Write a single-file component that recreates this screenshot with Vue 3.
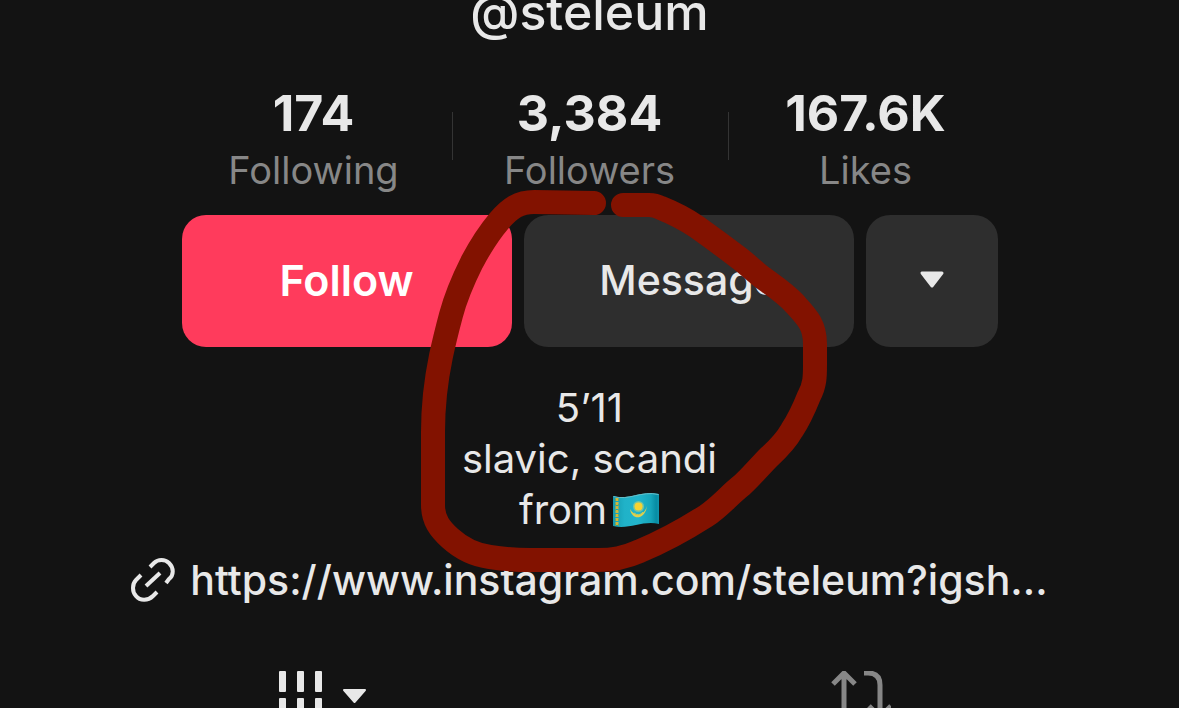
<script setup>
const stats = [
  { value: '174', label: 'Following' },
  { value: '3,384', label: 'Followers' },
  { value: '167.6K', label: 'Likes' },
]
</script>

<template>
  <main class="profile">
    <h1 class="handle">@steleum</h1>

    <ul class="stats">
      <li v-for="s in stats" :key="s.label" class="stat">
        <strong class="stat-value">{{ s.value }}</strong>
        <span class="stat-label">{{ s.label }}</span>
      </li>
    </ul>

    <div class="actions">
      <button class="btn follow" type="button">Follow</button>
      <button class="btn message" type="button">Message</button>
      <button class="btn more" type="button" aria-label="More options">
        <svg width="26" height="18" viewBox="0 0 26 18" aria-hidden="true">
          <path d="M3 2H23L13 15Z" fill="currentColor" stroke="currentColor" stroke-width="3" stroke-linejoin="round" />
        </svg>
      </button>
    </div>

    <div class="bio">
      <p>5’11</p>
      <p>slavic, scandi</p>
      <p class="origin">
        from
        <svg class="flag" width="48" height="36" viewBox="0 0 48 36" role="img" aria-label="Flag of Kazakhstan">
          <defs>
            <linearGradient id="cloth" x1="0" x2="1" y1="0" y2="0">
              <stop offset="0" stop-color="#159aae" />
              <stop offset="0.25" stop-color="#20b2c8" />
              <stop offset="0.55" stop-color="#22b5cc" />
              <stop offset="0.82" stop-color="#16a5ba" />
              <stop offset="0.94" stop-color="#078ca3" />
              <stop offset="1" stop-color="#1296ad" />
            </linearGradient>
          </defs>
          <path d="M1 4C17 9 29-2 47 2V32C31 28 17 38 1 34Z" fill="url(#cloth)" />
          <path d="M1.500 4.500C17 9 29-1.500 46.500 2.500" fill="none" stroke="#69bfc9" stroke-width="1" />
          <path d="M5 6V34" stroke="#d3b63a" stroke-width="3" stroke-dasharray="3 1" />
          <path d="M3.500 7V34M6.500 7V34" stroke="#6ea85c" stroke-width="1" stroke-dasharray="2 3" />
          <circle cx="26.500" cy="14.500" r="5.500" fill="#74c4a0" />
          <circle cx="26.500" cy="14.500" r="4" fill="#f6d332" />
          <path d="M18 17C20 29 33 28 35 14C32 24 23 26 18 17Z" fill="#e3d04b" />
          <path d="M22 21Q27 25 31 20" fill="none" stroke="#c9cc57" stroke-width="1" />
        </svg>
      </p>
    </div>

    <a class="link" href="https://www.instagram.com/steleum">
      <svg class="link-icon" width="44" height="44" viewBox="0 0 44 44" fill="none" stroke="currentColor" stroke-width="4" aria-hidden="true">
        <path d="M19 9L23 5C27 1 34 1 38 5C43 10 43 17 38 21L35 25" />
        <path d="M26 34L22 38C17 43 9 43 5 38C1 34 1 26 5 22L10 17" />
        <path d="M15 28L29 15" />
      </svg>
      <span class="link-text">https://www.instagram.com/steleum?igsh...</span>
    </a>

    <nav class="tabs">
      <button class="tab" type="button" aria-label="Posts">
        <svg width="88" height="48" viewBox="0 0 88 48" fill="currentColor" aria-hidden="true">
          <rect x="0" y="0" width="7" height="21" rx="1" />
          <rect x="18" y="0" width="7" height="21" rx="1" />
          <rect x="36" y="0" width="7" height="21" rx="1" />
          <rect x="0" y="27" width="7" height="21" rx="1" />
          <rect x="18" y="27" width="7" height="21" rx="1" />
          <rect x="36" y="27" width="7" height="21" rx="1" />
          <path d="M65 19H86L75.500 31Z" stroke="currentColor" stroke-width="2" stroke-linejoin="round" />
        </svg>
      </button>
      <button class="tab muted" type="button" aria-label="Reposts">
        <svg width="60" height="48" viewBox="0 0 60 48" fill="none" stroke="currentColor" stroke-width="5" aria-hidden="true">
          <path d="M13 48V2M2 13L13 2L24 13" stroke-linejoin="round" />
          <path d="M33 2H37Q49 2 49 14V46M38 35L49 46L60 35" />
        </svg>
      </button>
    </nav>

    <svg class="marker" width="1180" height="708" viewBox="0 0 1180 708" aria-hidden="true">
      <path d="M594 203L534 202C519 202 510 208 499 221C488 234 480 247 472 262C464 278 456 296 451 315C447 330 444 342 441 356C436 380 433 410 433 432V505C433 520 440 529 450 538C462 549 475 555 490 557Q510 560 530 560H598C613 560 624 558 640 551C662 542 684 530 706 516C721 506 728 496 742 485C751 477 760 466 769 457C779 448 787 439 792 430C800 418 805 406 809 396C815 385 815 376 815 365V344C815 325 807 317 795 304C786 294 774 286 763 278C754 271 748 265 739 258Q718 242 697 227Q681 216 661 208Q655 205 649 205H623" />
    </svg>
  </main>
</template>

<style>
body {
  background: #131313;
}
</style>

<style scoped>
.profile {
  position: relative;
  display: flex;
  flex-direction: column;
  align-items: center;
  height: 100vh;
  overflow: hidden;
  background: #131313;
  color: #e8e8e8;
  font-family: Inter, "Liberation Sans", sans-serif;
}

.handle {
  flex: none;
  margin: 0;
  font-size: 50px;
  font-weight: 500;
  line-height: 24px;
}

.stats {
  display: flex;
  flex: none;
  width: 100%;
  max-width: 828px;
  margin: 61px 0 0;
  padding: 0;
  list-style: none;
}

.stat {
  position: relative;
  display: flex;
  flex: 1;
  flex-direction: column;
  align-items: center;
}

.stat + .stat::before {
  content: "";
  position: absolute;
  top: 27px;
  left: 0;
  width: 1px;
  height: 48px;
  background: #343434;
}

.stat-value {
  font-size: 50px;
  font-weight: 700;
  line-height: 56px;
}

.stat-label {
  color: #878787;
  font-size: 38px;
  font-weight: 400;
  line-height: 58px;
}

.actions {
  display: flex;
  flex: none;
  gap: 12px;
  width: 100%;
  max-width: 816px;
  margin-top: 16px;
}

.btn {
  display: flex;
  flex: 1;
  align-items: center;
  justify-content: center;
  height: 132px;
  padding: 0 0 2px;
  border: 0;
  border-radius: 24px;
  background: #2e2e2e;
  color: #e8e8e8;
  font-family: inherit;
  font-size: 41px;
  font-weight: 500;
}

.btn.follow {
  background: #ff3b5c;
  color: #fff;
  font-size: 43px;
  font-weight: 600;
}

.btn.more {
  flex: 0 0 132px;
}

.bio {
  flex: none;
  margin-top: 35px;
  font-size: 40px;
  line-height: 51px;
  text-align: center;
}

.bio p {
  margin: 0;
}

.origin {
  display: flex;
  align-items: center;
  justify-content: center;
  gap: 5px;
}

.link {
  display: flex;
  flex: none;
  align-items: center;
  gap: 15px;
  margin-top: 17px;
  color: inherit;
  font-size: 41px;
  font-weight: 500;
  line-height: 56px;
  text-decoration: none;
}

.link-text {
  white-space: nowrap;
}

.tabs {
  display: flex;
  flex: none;
  box-sizing: border-box;
  width: 100%;
  max-width: 1080px;
  margin-top: 63px;
  padding-left: 4px;
}

.tab {
  display: flex;
  flex: 1;
  justify-content: center;
  padding: 0;
  border: 0;
  background: none;
  color: #e8e8e8;
}

.tab.muted {
  color: #878787;
}

.marker {
  position: absolute;
  top: 0;
  left: calc(50% - 590px);
  fill: none;
  stroke: #821200;
  stroke-width: 24px;
  stroke-linecap: round;
  stroke-linejoin: round;
  pointer-events: none;
}
</style>
